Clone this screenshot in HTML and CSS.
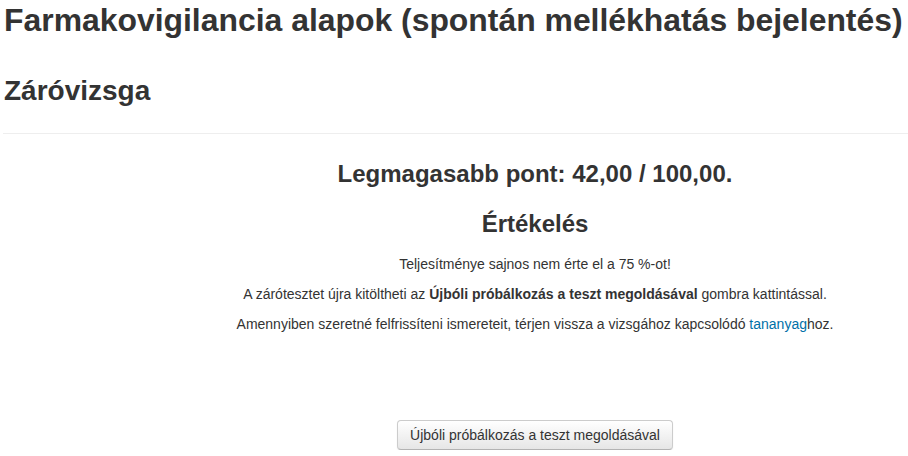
FILE: index.html
```html
<!DOCTYPE html>
<html lang="hu">
<head>
    <meta charset="UTF-8">
    <title>Farmakovigilancia alapok</title>
    <link rel="stylesheet" href="styles.css">
</head>
<body>

<div class="page">
    <h1>Farmakovigilancia alapok (spontán mellékhatás bejelentés)</h1>
    <h2>Záróvizsga</h2>
    <hr>

    <div class="quizbox">
        <h3>Legmagasabb pont: 42,00 / 100,00.</h3>
        <h3>Értékelés</h3>
        <p>Teljesítménye sajnos nem érte el a 75 %-ot!</p>
        <p>A zárótesztet újra kitöltheti az <b>Újbóli próbálkozás a teszt megoldásával</b> gombra kattintással.</p>
        <p>Amennyiben szeretné felfrissíteni ismereteit, térjen vissza a vizsgához kapcsolódó <a href="#">tananyag</a>hoz.</p>

        <div class="actions">
            <button class="btn">Újbóli próbálkozás a teszt megoldásával</button>
        </div>
    </div>
</div>

</body>
</html>
```

FILE: styles.css
```css
body {
    font-family: "Liberation Sans", Arial, sans-serif;
    font-size: 14px;
    line-height: 20px;
    color: #333;
    background-color: #fff;
    margin: 0;
    padding: 0;
}
.page {
    padding: 0 0 0 4px;
}
h1, h2, h3 {
    font-weight: bold;
    line-height: 40px;
    color: #333;
}
h1 {
    font-size: 31.9px;
    margin: 0;
}
h2 {
    font-size: 28px;
    margin: 31px 0 0;
}
h3 {
    font-size: 24px;
    margin: 10px 0;
}
hr {
    margin: 22px 0 0 -1px;
    border: 0;
    border-top: 1px solid #eee;
    border-bottom: 1px solid #fff;
}
.quizbox {
    margin-left: 158px;
    padding-top: 9px;
    text-align: center;
}
p {
    margin: 0 0 10px;
}
a {
    color: #0070a8;
    text-decoration: none;
}
.actions {
    margin-top: 86px;
}
.btn {
    font-family: "Liberation Sans", Arial, sans-serif;
    font-size: 14px;
    line-height: 20px;
    color: #333;
    padding: 4px 12px;
    background-color: #f5f5f5;
    background-image: linear-gradient(to bottom, #fff, #e6e6e6);
    border: 1px solid #ccc;
    border-bottom-color: #b3b3b3;
    border-radius: 4px;
    box-shadow: inset 0 1px 0 rgba(255, 255, 255, 0.2), 0 1px 2px rgba(0, 0, 0, 0.05);
    cursor: pointer;
}
```
